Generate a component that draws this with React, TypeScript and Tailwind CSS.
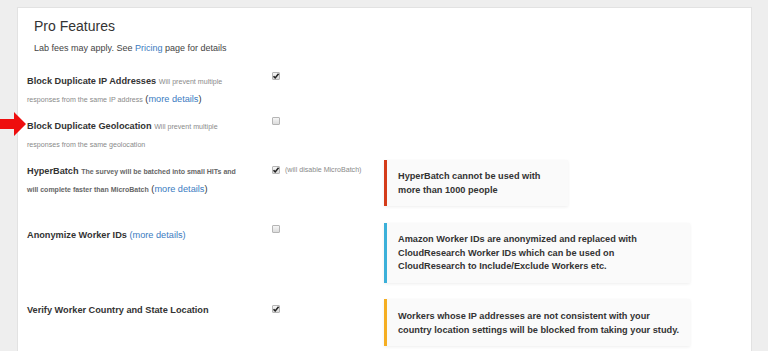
import React from 'react';

const Check = ({ checked }: { checked?: boolean }) => (
  <span className="relative inline-block w-[8px] h-[8px] border border-[#b5b5b5] rounded-[1px] bg-gradient-to-b from-[#f6f6f6] to-[#dcdcdc]">
    {checked && (
      <svg viewBox="0 0 8 8" className="absolute left-[-1px] top-[-1px] w-[8px] h-[8px]">
        <path d="M1.5 4.2 L3.2 5.9 L6.6 1.8" fill="none" stroke="#222" strokeWidth="1.6" />
      </svg>
    )}
  </span>
);

const More = () => (
  <span className="text-[9.2px] leading-[10px] font-normal text-[#333]">
    (<span className="text-[#3b7bbf]">more details</span>)
  </span>
);

const Alert = ({ color, width, children }: { color: string; width: string; children: React.ReactNode }) => (
  <div
    className={`${width} ${color} border-l-[3px] bg-[#fafafa] shadow-[0_1px_3px_rgba(0,0,0,0.07)] pl-[11px] pr-[8px] pt-[10px] pb-[9px] text-[9.2px] font-bold leading-[13.5px] text-[#333]`}
  >
    {children}
  </div>
);

export default function App() {
  return (
    <div className="relative min-h-screen bg-[#eeeeee] pt-[7px] pl-[17px] pr-[16px] font-['Liberation_Sans',Arial,sans-serif]">
      <div className="h-[344px] overflow-hidden bg-white border border-[#e2e2e2] border-b-0 pt-[10px]">
        <div className="pl-[16px] text-[14px] leading-[17px] text-[#333]">Pro Features</div>
        <div className="pl-[16px] mt-[7px] text-[9px] leading-[12px] text-[#444]">
          Lab fees may apply. See <span className="text-[#3b7bbf]">Pricing</span> page for details
        </div>

        <div className="pl-[9px] mt-[18px] text-[#333]">
          {/* row 1 */}
          <div className="flex items-start">
            <div className="w-[245px] text-[9.2px] leading-[18px] font-bold">
              Block Duplicate IP Addresses{' '}
              <span className="text-[7.1px] leading-[10px] font-normal text-[#8a8a8a]">Will prevent multiple</span>
              <br />
              <span className="text-[7.1px] leading-[10px] font-normal text-[#8a8a8a]">responses from the same IP address</span> <More />
            </div>
            <div className="flex">
              <Check checked />
            </div>
          </div>

          {/* row 2 */}
          <div className="flex items-start mt-[9px]">
            <div className="w-[245px] text-[9.2px] leading-[18px] font-bold">
              Block Duplicate Geolocation{' '}
              <span className="text-[7.1px] leading-[10px] font-normal text-[#8a8a8a]">Will prevent multiple</span>
              <br />
              <span className="text-[7.1px] leading-[10px] font-normal text-[#8a8a8a]">responses from the same geolocation</span>
            </div>
            <div className="flex">
              <Check />
            </div>
          </div>

          {/* row 3 */}
          <div className="flex items-start mt-[7px]">
            <div className="w-[245px] mt-[3px] text-[9.2px] leading-[17.7px] font-bold">
              HyperBatch{' '}
              <span className="text-[7px] leading-[10px] text-[#666]">The survey will be batched into small HITs and</span>
              <br />
              <span className="text-[7px] leading-[10px] text-[#666]">will complete faster than MicroBatch</span> <More />
            </div>
            <div className="w-[112px] mt-[6px] flex items-start gap-[5px]">
              <Check checked />
              <span className="text-[7.1px] leading-[9px] text-[#8a8a8a]">(will disable MicroBatch)</span>
            </div>
            <Alert color="border-[#d43c1a]" width="w-[184px]">
              HyperBatch cannot be used with
              <br />
              more than 1000 people
            </Alert>
          </div>

          {/* row 4 */}
          <div className="flex items-start mt-[17px]">
            <div className="w-[245px] mt-[2.5px] text-[9.2px] leading-[18px] font-bold">
              Anonymize Worker IDs <span className="font-normal text-[#3b7bbf]">(more details)</span>
            </div>
            <div className="w-[112px] mt-[2px] flex">
              <Check />
            </div>
            <Alert color="border-[#3cb0d9]" width="w-[306px]">
              Amazon Worker IDs are anonymized and replaced with
              <br />
              CloudResearch Worker IDs which can be used on
              <br />
              CloudResearch to Include/Exclude Workers etc.
            </Alert>
          </div>

          {/* row 5 */}
          <div className="flex items-start mt-[16px]">
            <div className="w-[245px] mt-[2px] text-[9.2px] leading-[18px] font-bold">
              Verify Worker Country and State Location
            </div>
            <div className="w-[112px] mt-[6px] flex">
              <Check checked />
            </div>
            <Alert color="border-[#f5ae22]" width="w-[306px]">
              <div className="leading-[14px]">
                Workers whose IP addresses are not consistent with your
                <br />
                country location settings will be blocked from taking your study.
              </div>
            </Alert>
          </div>
        </div>
      </div>

      {/* red pointer arrow */}
      <svg className="absolute left-0 top-[110px] w-[28px] h-[28px]" viewBox="0 0 28 28">
        <polygon points="0,9 14,9 14,2 26,14 14,26 14,19 0,19" fill="#ee0e0e" />
      </svg>
    </div>
  );
}
